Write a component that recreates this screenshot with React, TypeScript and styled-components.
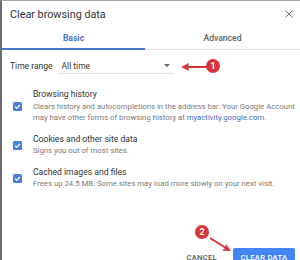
import React from "react";
import styled, { createGlobalStyle } from "styled-components";

const Global = createGlobalStyle`
  html, body { margin: 0; padding: 0; background: #fff; }
  body { font-family: Roboto, "Liberation Sans", Arial, sans-serif; }
`;

const Dialog = styled.div`
  position: relative;
  width: 300px;
  height: 260px;
  box-sizing: border-box;
  background: #fff;
  border-left: 2px solid #6e6e6e;
  border-top: 1px solid #a8a8a8;
  overflow: hidden;
  display: flex;
  flex-direction: column;
`;

const Header = styled.div`
  height: 26px;
  display: flex;
  align-items: center;
  justify-content: space-between;
  padding: 0 6px 0 8px;
`;

const Title = styled.div`
  font-size: 10.8px;
  color: #333;
`;

const Close = styled.div`
  width: 10px;
  height: 10px;
  display: flex;
  align-items: center;
  justify-content: center;
`;

const Tabs = styled.div`
  display: flex;
  height: 22px;
  border-bottom: 1px solid #e4e4e4;
`;

const Tab = styled.div<{ $active?: boolean }>`
  width: 143px;
  display: flex;
  align-items: center;
  justify-content: center;
  font-size: 8.6px;
  font-weight: ${(p) => (p.$active ? 700 : 500)};
  color: ${(p) => (p.$active ? "#4a76c7" : "#616161")};
  border-bottom: 2px solid ${(p) => (p.$active ? "#4a76c7" : "transparent")};
  margin-bottom: -1px;
  flex: ${(p) => (p.$active ? "none" : "1")};
`;

const Body = styled.div`
  padding: 8px 0 0 8px;
  display: flex;
  flex-direction: column;
`;

const RangeRow = styled.div`
  display: flex;
  align-items: center;
  height: 16px;
  gap: 5px;
`;

const RangeLabel = styled.div`
  font-size: 8.5px;
  color: #333;
`;

const Select = styled.div`
  width: 116px;
  height: 15px;
  box-sizing: border-box;
  border-bottom: 1px solid #e2e2e2;
  display: flex;
  align-items: center;
  justify-content: space-between;
  padding: 0 4px 0 4px;
  font-size: 8.5px;
  color: #333;
`;

const Caret = styled.div`
  width: 0;
  height: 0;
  border-left: 3px solid transparent;
  border-right: 3px solid transparent;
  border-top: 3px solid #666;
`;

const List = styled.div`
  display: flex;
  flex-direction: column;
  gap: 10px;
  margin-top: 15px;
`;

const Item = styled.div`
  display: flex;
  align-items: center;
  gap: 11px;
  padding-left: 3px;
`;

const Box = styled.div`
  width: 9px;
  height: 9px;
  border-radius: 1.5px;
  background: #4a7fd9;
  display: flex;
  align-items: center;
  justify-content: center;
  flex: none;
`;

const Texts = styled.div`
  display: flex;
  flex-direction: column;
`;

const Label = styled.div`
  font-size: 8.6px;
  line-height: 11.5px;
  color: #333;
`;

const Desc = styled.div`
  font-size: 7.75px;
  line-height: 11.5px;
  color: #7a7a7a;
  white-space: nowrap;
`;

const Link = styled.span`
  color: #3f6fc4;
`;

const Footer = styled.div`
  margin-top: auto;
  display: flex;
  justify-content: flex-end;
  align-items: flex-start;
  gap: 16px;
  padding-right: 5px;
  height: 12px;
`;

const TextButton = styled.div`
  font-size: 7.6px;
  font-weight: 500;
  color: #555;
  letter-spacing: 0.3px;
  padding-top: 5px;
`;

const PrimaryButton = styled.div`
  width: 62px;
  height: 17px;
  background: #4285f4;
  border-radius: 2px;
  color: #fff;
  font-size: 7.6px;
  font-weight: 500;
  letter-spacing: 0.3px;
  display: flex;
  justify-content: center;
  padding-top: 5px;
  box-sizing: border-box;
`;

const Badge = styled.div<{ $x: number; $y: number }>`
  position: absolute;
  left: ${(p) => p.$x}px;
  top: ${(p) => p.$y}px;
  width: 14px;
  height: 14px;
  border-radius: 50%;
  background: #d9333b;
  color: #fff;
  font-size: 9px;
  font-weight: 700;
  display: flex;
  align-items: center;
  justify-content: center;
`;

const Overlay = styled.svg`
  position: absolute;
  left: 0;
  top: 0;
  pointer-events: none;
`;

const Check = () => (
  <svg width="7" height="7" viewBox="0 0 10 10">
    <path d="M1.5 5.2 L4 7.6 L8.6 2.6" fill="none" stroke="#fff" strokeWidth="1.8" />
  </svg>
);

export default function App() {
  return (
    <>
      <Global />
      <Dialog>
        <Header>
          <Title>Clear browsing data</Title>
          <Close>
            <svg width="8" height="8" viewBox="0 0 8 8">
              <path d="M0.5 0.5 L7.5 7.5 M7.5 0.5 L0.5 7.5" stroke="#777" strokeWidth="1" />
            </svg>
          </Close>
        </Header>
        <Tabs>
          <Tab $active>Basic</Tab>
          <Tab>Advanced</Tab>
        </Tabs>
        <Body>
          <RangeRow>
            <RangeLabel>Time range</RangeLabel>
            <Select>
              <span>All time</span>
              <Caret />
            </Select>
          </RangeRow>
          <List>
            <Item>
              <Box><Check /></Box>
              <Texts>
                <Label>Browsing history</Label>
                <Desc>Clears history and autocompletions in the address bar. Your Google Account</Desc>
                <Desc>
                  may have other forms of browsing history at <Link>myactivity.google.com</Link>.
                </Desc>
              </Texts>
            </Item>
            <Item>
              <Box><Check /></Box>
              <Texts>
                <Label>Cookies and other site data</Label>
                <Desc>Signs you out of most sites.</Desc>
              </Texts>
            </Item>
            <Item>
              <Box><Check /></Box>
              <Texts>
                <Label>Cached images and files</Label>
                <Desc>Frees up 24.5 MB. Some sites may load more slowly on your next visit.</Desc>
              </Texts>
            </Item>
          </List>
        </Body>
        <Footer>
          <TextButton>CANCEL</TextButton>
          <PrimaryButton>CLEAR DATA</PrimaryButton>
        </Footer>
        <Overlay width="300" height="260" viewBox="0 0 300 260">
          <path d="M205 66 L184 66" stroke="#d9333b" strokeWidth="2" />
          <path d="M179 66 L187 62 L186 66 L187 70 Z" fill="#d9333b" />
          <path d="M208 237 L224 247" stroke="#d9333b" strokeWidth="2" />
          <path d="M229 250 L220 249.5 L223 247 L224 243 Z" fill="#d9333b" />
        </Overlay>
        <Badge $x={204} $y={58}>1</Badge>
        <Badge $x={193} $y={224}>2</Badge>
      </Dialog>
    </>
  );
}
